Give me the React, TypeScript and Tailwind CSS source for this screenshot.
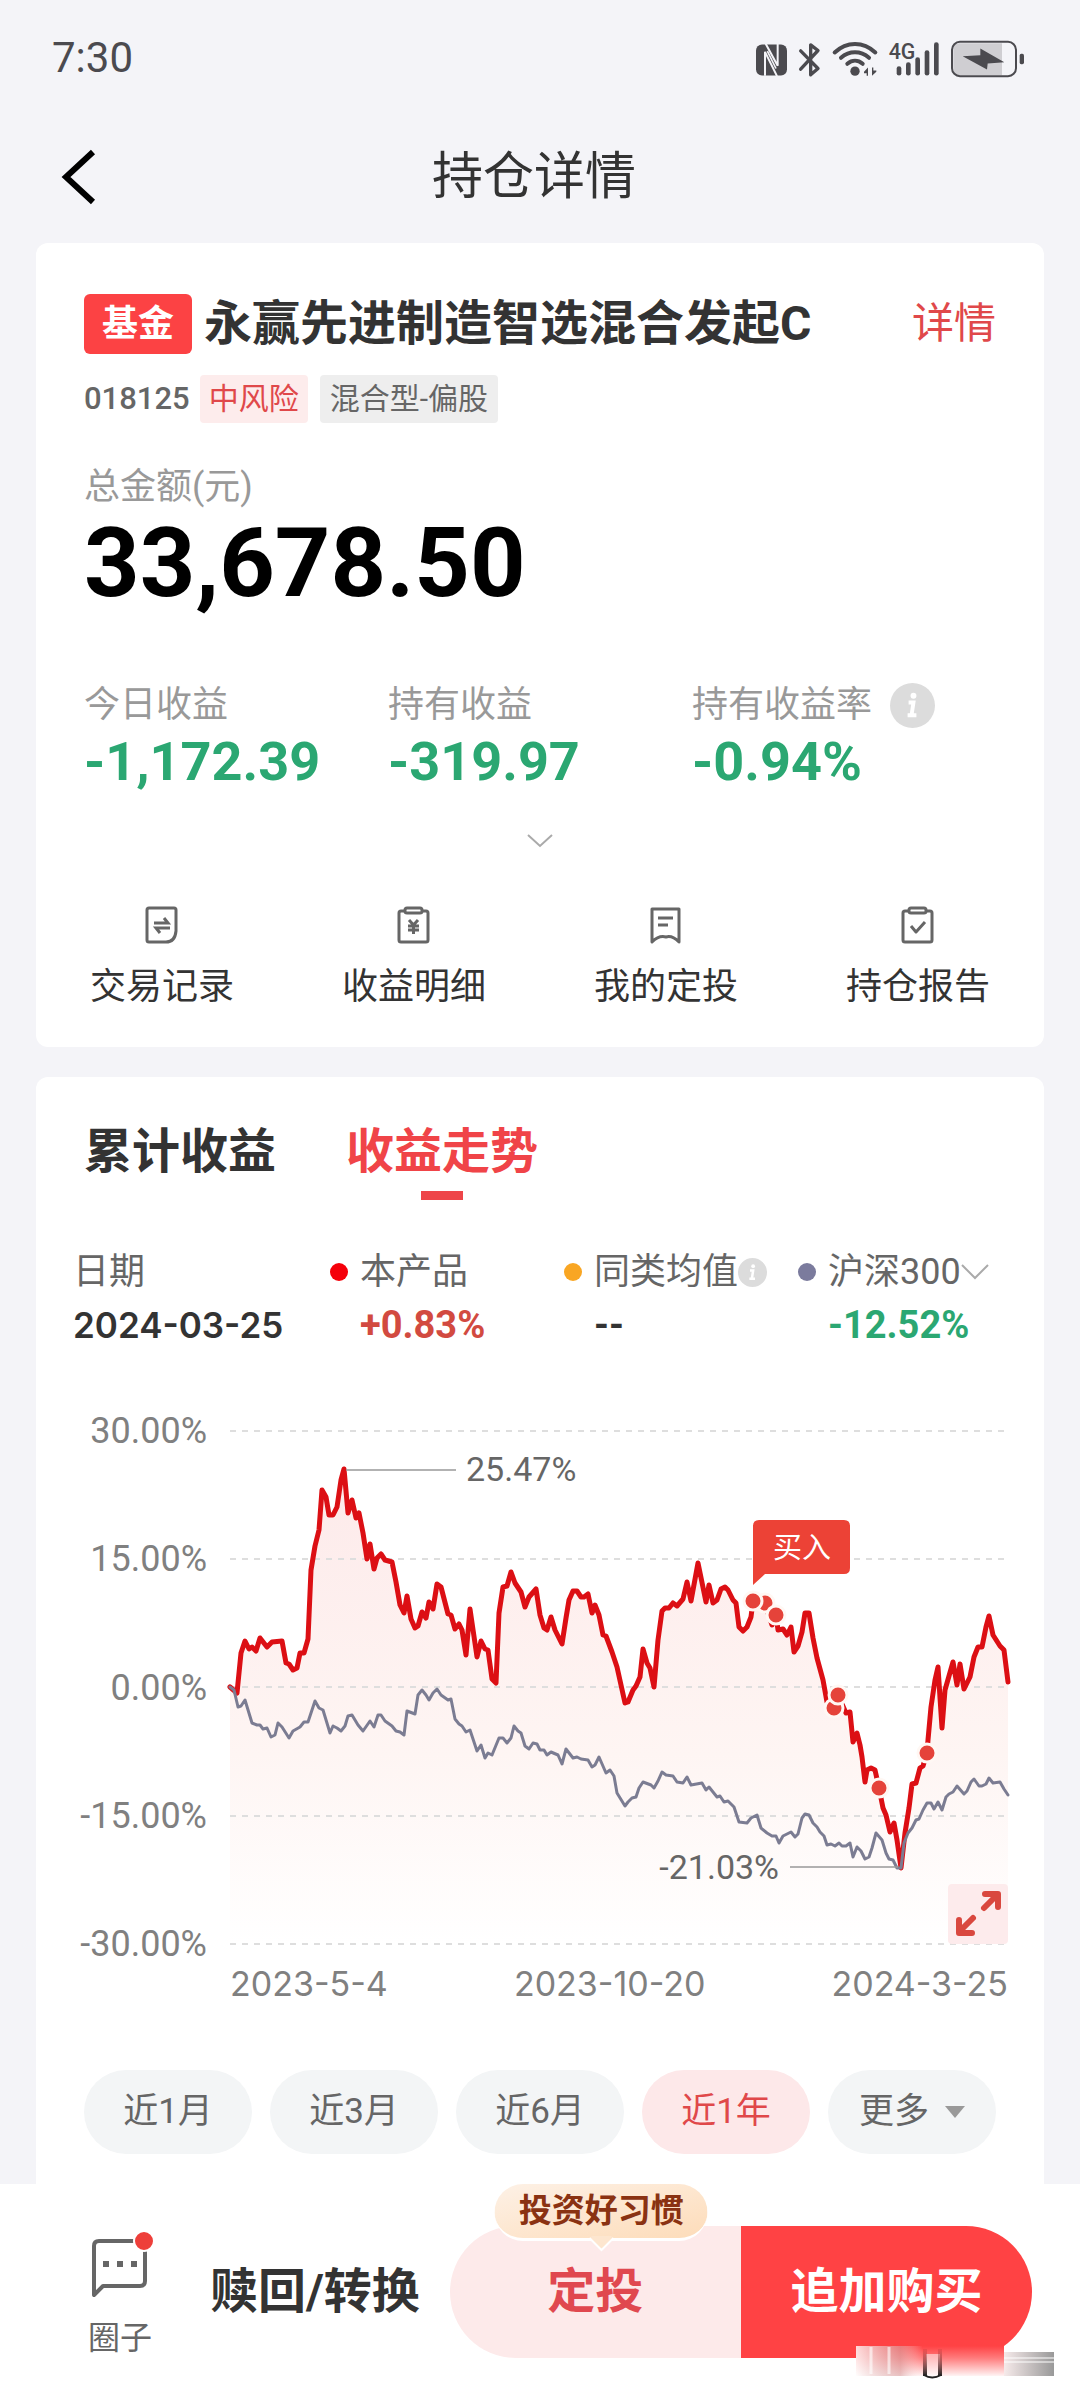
import React from "react";

const RED_LINE =
  "0,287 7,293 11,253 15,241 19,249 22,247 26,251 30,238 37,247 42,242 52,241 56,263 59,264 63,270 67,268 70,253 74,253 78,239 81,170 85,146 89,130 92,90 96,97 99,115 103,115 107,107 111,80 114,69 118,113 122,100 126,118 129,113 133,133 137,159 140,144 144,169 147,158 151,154 155,160 162,162 166,182 170,205 174,213 177,196 181,219 185,228 188,226 192,212 196,218 199,202 203,209 207,184 211,187 218,214 221,215 225,229 229,224 232,230 236,255 240,209 247,257 251,241 255,249 258,250 262,279 266,283 269,213 273,187 277,186 281,172 285,183 291,192 295,207 299,197 306,189 310,215 314,228 317,230 321,217 325,230 332,244 336,218 339,200 343,191 347,191 351,197 354,197 358,194 362,213 365,205 369,215 373,235 376,236 382,252 387,267 395,303 398,302 403,290 406,286 410,277 413,249 417,263 420,268 424,287 428,240 432,211 435,208 439,208 443,203 447,206 453,199 457,182 461,201 468,163 476,202 479,185 483,203 487,200 491,189 495,187 498,190 503,200 506,203 509,227 513,231 517,227 521,217 523,201 535,203 538,213 542,225 546,215 548,230 553,229 557,235 561,227 564,252 568,246 572,232 575,213 579,213 583,238 587,258 593,280 597,302 604,308 608,295 616,313 620,312 623,342 627,333 630,345 632,357 635,382 637,370 641,368 645,370 649,388 653,408 656,415 660,432 664,423 667,440 671,468 675,433 679,408 682,384 686,383 690,368 693,366 697,353 698,340 701,307 705,280 708,267 712,328 715,290 723,262 727,285 730,264 734,289 740,277 744,257 748,247 752,247 756,227 759,216 763,235 770,246 774,250 778,282";

const GRAY_LINE =
  "0,287 4,290 8,307 11,306 15,300 22,323 27,325 30,325 33,329 37,328 41,337 45,335 48,323 52,327 59,338 63,331 70,327 74,322 78,322 85,301 89,308 93,310 100,333 103,326 107,328 111,331 115,326 118,316 122,315 128,325 133,331 140,321 144,327 148,315 151,315 155,321 162,326 166,331 170,332 174,335 177,311 185,314 188,295 192,290 196,295 199,300 203,293 207,289 211,295 218,300 221,299 225,319 229,324 232,326 236,332 240,330 247,351 251,345 255,358 258,353 262,355 269,338 273,338 277,343 281,338 284,326 288,331 291,333 295,346 299,349 303,343 307,344 310,350 314,350 317,355 321,352 328,355 332,364 336,349 343,358 347,357 351,359 358,360 362,367 365,365 369,357 376,373 380,370 384,376 387,393 395,406 398,402 402,398 406,397 409,388 413,382 421,385 424,388 428,381 432,372 436,375 443,376 447,382 453,383 457,377 461,385 472,383 476,390 479,387 487,397 490,396 494,402 498,401 504,407 509,422 517,423 521,418 527,415 531,428 537,433 542,436 546,436 549,443 553,436 561,432 565,437 568,434 572,418 575,414 579,415 583,423 587,427 590,432 594,436 597,445 601,444 605,446 609,443 612,446 616,446 620,443 623,457 627,447 631,451 635,459 639,457 642,448 646,433 652,440 656,453 659,459 663,460 667,468 671,468 674,443 678,433 682,428 686,420 689,419 693,410 697,403 701,403 704,409 708,402 712,410 716,397 719,394 723,392 727,386 734,394 737,391 741,382 744,379 749,386 752,386 756,384 759,378 763,383 770,382 774,389 778,395";

const BUY_POINTS = [
  [535, 203],
  [523, 201],
  [546, 215],
  [604, 308],
  [608, 295],
  [649, 388],
  [697, 353],
];

function StatusIcons() {
  return (
    <svg viewBox="45 50 810 116" className="h-[39px] w-[270px]" fill="#4b4a4f" aria-hidden="true">
      <rect x="48" y="66" width="93" height="93" rx="18" />
      <g stroke="#f4f4f8" strokeWidth="6" fill="none">
        <path d="M75 160 V88 L111 161" />
        <path d="M77 64 L113 130 V64" />
        <path d="M82 86 L108 138" strokeWidth="5" />
      </g>
      <path d="M182 85 L234 138 L212 157 V67 L234 84 L182 140" fill="none" stroke="#4b4a4f" strokeWidth="10" strokeLinecap="round" strokeLinejoin="round" />
      <g fill="none" stroke="#4b4a4f" strokeWidth="12" strokeLinecap="round">
        <path d="M284 90 C320 56 370 56 406 90" />
        <path d="M303 106 C328 84 362 84 387 106" />
        <path d="M322 124 C336 112 354 112 368 124" />
      </g>
      <circle cx="345" cy="146" r="14" />
      <path d="M372 148 L384 135 V160 H380 V152 H372 Z M409 148 L396 160 V135 H400 V144 H409 Z" />
      <text x="446" y="108" fontFamily="Roboto, sans-serif" fontSize="64" fontWeight="500">4G</text>
      <g stroke="#4b4a4f" strokeWidth="14" strokeLinecap="round">
        <path d="M477 138 V152" />
        <path d="M505 126 V152" />
        <path d="M533 111 V152" />
        <path d="M561 90 V152" />
        <path d="M589 66 V152" />
      </g>
      <path d="M658 62 H786 V158 H658 Q640 158 640 138 V82 Q640 62 658 62 Z" fill="#cfced2" />
      <rect x="636" y="58" width="192" height="103" rx="24" fill="none" stroke="#4b4a4f" strokeWidth="6" />
      <path d="M668 101 L721 98 L721 78 L793 119 L743 123 L741 141 Z" />
      <rect x="839" y="94" width="13" height="31" rx="5" />
    </svg>
  );
}

function InfoDot({ className }: { className: string }) {
  return (
    <svg viewBox="0 0 46 46" className={className} aria-hidden="true">
      <circle cx="23" cy="23" r="23" fill="#dcdcdc" />
      <circle cx="24" cy="13" r="3" fill="#fff" />
      <path d="M19 20 H24 L22 33 M18 33 H27" fill="none" stroke="#fff" strokeWidth="4" />
    </svg>
  );
}

const iconProps = {
  viewBox: "0 0 40 40",
  className: "size-10",
  fill: "none",
  stroke: "#666",
  strokeWidth: 3,
  strokeLinejoin: "round" as const,
  "aria-hidden": true,
};

const ACTIONS = [
  {
    label: "交易记录",
    icon: (
      <svg {...iconProps}>
        <path d="M7 3 H32 Q34 3 34 5 V26 Q33 37 24 37 H7 Q5 37 5 35 V5 Q5 3 7 3 Z" />
        <path d="M12 18 H26 L22 13 M28 23 H14 L18 28" strokeWidth="3" strokeLinejoin="miter" />
      </svg>
    ),
  },
  {
    label: "收益明细",
    icon: (
      <svg {...iconProps}>
        <path d="M11 6 H7 Q5 6 5 8 V35 Q5 37 7 37 H32 Q34 37 34 35 V8 Q34 6 32 6 H28" />
        <rect x="11" y="3" width="17" height="5" rx="2" />
        <path d="M15 15 L19.500 20 L24 15 M19.500 20 V29 M14 21 H25 M14 25 H25" />
      </svg>
    ),
  },
  {
    label: "我的定投",
    icon: (
      <svg {...iconProps}>
        <path d="M6 4 H33 V37 Q26 30 20 32 Q13 30 6 37 Z" />
        <path d="M12 13 H27 M12 20 H22" />
      </svg>
    ),
  },
  {
    label: "持仓报告",
    icon: (
      <svg {...iconProps}>
        <path d="M11 6 H7 Q5 6 5 8 V35 Q5 37 7 37 H32 Q34 37 34 35 V8 Q34 6 32 6 H28" />
        <rect x="11" y="3" width="17" height="5" rx="2" />
        <path d="M13 21 L18 27 L27 17" />
      </svg>
    ),
  },
];

function StatusBar() {
  return (
    <div className="flex h-[116px] items-center justify-between pr-[55px] pl-[52px]">
      <span className="text-[42px] leading-[48px] text-[#4b4a4f]">7:30</span>
      <StatusIcons />
    </div>
  );
}

function NavBar() {
  return (
    <header className="relative flex h-[122px] items-center justify-center pr-3">
      <button aria-label="返回" className="absolute left-[54px]">
        <svg viewBox="0 0 48 60" className="h-[60px] w-12" fill="none" stroke="#000" strokeWidth="6" aria-hidden="true">
          <path d="M39 5 L12 30 L39 55" />
        </svg>
      </button>
      <h1 className="text-[51px] leading-[60px] text-[#333]">持仓详情</h1>
    </header>
  );
}

function Metric({ label, value, info }: { label: string; value: string; info?: boolean }) {
  return (
    <div>
      <div className="flex h-12 items-center gap-[18px] text-4xl leading-[48px] whitespace-nowrap text-[#999]">
        {label}
        {info && <InfoDot className="size-[45px]" />}
      </div>
      <div className="mt-[3px] text-[54px] leading-[60px] font-bold text-[#2ba772]">{value}</div>
    </div>
  );
}

function HoldingCard() {
  return (
    <section className="mx-9 mt-[5px] rounded-xl bg-white pt-[51px] pb-9">
      <div className="px-12">
        <div className="flex items-center">
          <span className="flex h-[60px] w-[108px] items-center justify-center rounded-md bg-[#fc4244] text-4xl font-bold text-white">基金</span>
          <h2 className="ml-3 text-[48px] leading-[60px] font-bold text-[#333]">永赢先进制造智选混合发起C</h2>
          <a href="#detail" className="ml-auto text-[42px] leading-[60px] text-[#e0484a]">详情</a>
        </div>
        <div className="mt-[21px] flex items-center text-[30px] leading-[48px]">
          <span className="text-[31px] font-medium text-[#666]">018125</span>
          <span className="ml-[10px] rounded bg-[#fdecec] px-[9px] text-[#e0484a]">中风险</span>
          <span className="ml-3 rounded bg-[#eee] px-[10px] text-[#666]">混合型-偏股</span>
        </div>
        <div className="mt-10 text-4xl leading-[48px] text-[#999]">总金额(元)</div>
        <div className="text-[97px] leading-[104px] font-bold text-black">33,678.50</div>
        <div className="mt-[66px] grid grid-cols-3">
          <Metric label="今日收益" value="-1,172.39" />
          <Metric label="持有收益" value="-319.97" />
          <Metric label="持有收益率" value="-0.94%" info />
        </div>
      </div>
      <button aria-label="展开" className="mx-auto mt-[31px] flex h-9 w-12 items-center justify-center">
        <svg viewBox="0 0 26 14" className="h-[14px] w-[26px]" fill="none" stroke="#aaa" strokeWidth="2" aria-hidden="true">
          <path d="M1 1 L13 12 L25 1" />
        </svg>
      </button>
      <nav className="mt-[46px] grid grid-cols-4">
        {ACTIONS.map((a) => (
          <button key={a.label} className="flex flex-col items-center gap-[18px] text-4xl leading-[48px] text-[#333]">
            {a.icon}
            {a.label}
          </button>
        ))}
      </nav>
    </section>
  );
}

function Legend() {
  return (
    <div className="mt-12 grid grid-cols-[257fr_234fr_234fr_234fr] gap-y-[5px] pr-3 pl-[37px] text-4xl leading-[48px] whitespace-nowrap text-[#666]">
      <div>日期</div>
      <div className="flex items-center gap-3">
        <i className="size-[18px] rounded-full bg-[#f5000a]" />
        本产品
      </div>
      <div className="flex items-center">
        <i className="mr-3 size-[18px] rounded-full bg-[#f9a623]" />
        同类均值
        <InfoDot className="size-[29px]" />
      </div>
      <button className="flex items-center">
        <i className="mr-3 size-[18px] rounded-full bg-[#7b7b9d]" />
        沪深300
        <svg viewBox="0 0 28 16" className="h-4 w-7" fill="none" stroke="#aaa" strokeWidth="2" aria-hidden="true">
          <path d="M1 1 L14 14 L27 1" />
        </svg>
      </button>
      <div className="font-[Inter] text-[35px] font-semibold text-[#333]">2024-03-25</div>
      <div className="pl-[30px] text-[38px] font-bold text-[#d24a40]">+0.83%</div>
      <div className="pl-[30px] text-[38px] font-bold text-[#333]">--</div>
      <div className="pl-[30px] text-[38px] font-bold text-[#2ba772]">-12.52%</div>
    </div>
  );
}

function Chart() {
  return (
    <div className="mt-[51px] grid grid-cols-[171fr_778fr] gap-x-[23px] pr-9">
      <div className="flex flex-col justify-between pt-[13px] text-right text-[36px] leading-9 text-[#808080]">
        <span>30.00%</span>
        <span>15.00%</span>
        <span>0.00%</span>
        <span>-15.00%</span>
        <span>-30.00%</span>
      </div>
      <div className="relative">
        <svg viewBox="0 0 778 562" className="block w-full overflow-visible" role="img" aria-label="收益走势">
          <defs>
            <linearGradient id="area" x1="0" y1="69" x2="0" y2="544" gradientUnits="userSpaceOnUse">
              <stop offset="0" stopColor="#fdeaea" />
              <stop offset="0.6" stopColor="#fef5f3" />
              <stop offset="1" stopColor="#ffffff" />
            </linearGradient>
          </defs>
          <polygon points={`0,544 ${RED_LINE} 778,544`} fill="url(#area)" />
          <g stroke="#dedede" strokeWidth="2" strokeDasharray="6 6">
            {[31, 159, 287, 416, 544].map((y) => (
              <path key={y} d={`M0 ${y} H778`} />
            ))}
          </g>
          <polyline points={RED_LINE} fill="none" stroke="#dc0f14" strokeWidth="5" strokeLinejoin="round" strokeLinecap="round" />
          <polyline points={GRAY_LINE} fill="none" stroke="#7b7c92" strokeWidth="3" strokeLinejoin="round" strokeLinecap="round" />
          <path d="M116 70 H226 M560 467 H668" stroke="#999" strokeWidth="1.500" />
          <g fontSize="34" fill="#666">
            <text x="236" y="81">25.47%</text>
            <text x="549" y="479" textAnchor="end">-21.03%</text>
          </g>
          {BUY_POINTS.map(([x, y]) => (
            <circle key={x} cx={x} cy={y} r="9" fill="#e5433a" stroke="#fff8f4" strokeWidth="3" />
          ))}
          <path d="M529 120 H614 Q620 120 620 126 V168 Q620 174 614 174 H535 L523 185 V126 Q523 120 529 120 Z" fill="#ec4236" />
          <text x="572" y="158" textAnchor="middle" fontSize="29" fill="#fff">买入</text>
        </svg>
        <button aria-label="全屏" className="absolute right-0 bottom-[18px] flex size-[60px] items-center justify-center rounded bg-[#fdebec]">
          <svg viewBox="0 0 60 60" className="size-[60px]" fill="none" stroke="#d9483f" strokeWidth="6" strokeLinecap="round" strokeLinejoin="round" aria-hidden="true">
            <path d="M36 24 L49 11 M37 10 H50 V23 M25 34 L12 47 M11 36 V49 H24" />
          </svg>
        </button>
      </div>
      <div className="col-start-2 flex justify-between font-[Inter] text-[34px] leading-[44px] text-[#808080]">
        <span>2023-5-4</span>
        <span>2023-10-20</span>
        <span>2024-3-25</span>
      </div>
    </div>
  );
}

function TrendCard() {
  return (
    <section className="mx-9 mt-[30px] rounded-t-xl bg-white pt-[45px] pb-[30px]">
      <div className="flex gap-[70px] px-12 text-[48px] leading-[60px] font-bold">
        <button className="self-start text-[#333]">累计收益</button>
        <button className="flex flex-col items-center gap-[9px] text-[#f04448]">
          收益走势
          <span className="h-[9px] w-[42px] bg-[#ee4549]" />
        </button>
      </div>
      <Legend />
      <Chart />
      <div className="mt-16 grid grid-cols-5 gap-[18px] px-12 text-[35px] text-[#666]">
        {["近1月", "近3月", "近6月"].map((t) => (
          <button key={t} className="h-[84px] rounded-full bg-[#f3f5f6]">{t}</button>
        ))}
        <button className="h-[84px] rounded-full bg-[#fde8e9] text-[#e0484a]">近1年</button>
        <button className="flex h-[84px] items-center justify-center gap-4 rounded-full bg-[#f3f5f6]">
          更多
          <svg viewBox="0 0 20 12" className="h-3 w-5" fill="#999" aria-hidden="true">
            <path d="M0 0 H20 L10 12 Z" />
          </svg>
        </button>
      </div>
    </section>
  );
}

function Smear() {
  return (
    <svg viewBox="0 0 200 34" className="pointer-events-none absolute top-[162px] right-[24px] h-[34px] w-[200px]" aria-hidden="true">
      <defs>
        <linearGradient id="sm-red" x1="0" y1="0" x2="0" y2="1">
          <stop offset="0" stopColor="#ff4244" />
          <stop offset="0.4" stopColor="#ff7b7c" />
          <stop offset="1" stopColor="#fff4f4" />
        </linearGradient>
        <linearGradient id="sm-side" x1="0" y1="0" x2="1" y2="0">
          <stop offset="0" stopColor="#fff" stopOpacity="0.8" />
          <stop offset="0.3" stopColor="#d9a3a3" stopOpacity="0.6" />
          <stop offset="0.45" stopColor="#fff" stopOpacity="0" />
        </linearGradient>
        <linearGradient id="sm-gray" x1="0" y1="0" x2="1" y2="0">
          <stop offset="0" stopColor="#f6eaea" />
          <stop offset="1" stopColor="#999" />
        </linearGradient>
        <linearGradient id="sm-dark" x1="0" y1="0" x2="0" y2="1">
          <stop offset="0" stopColor="#a33" stopOpacity="0.2" />
          <stop offset="1" stopColor="#222" />
        </linearGradient>
      </defs>
      <rect x="0" y="0" width="148" height="30" fill="url(#sm-red)" />
      <rect x="0" y="0" width="148" height="30" fill="url(#sm-side)" />
      <path d="M15 1 V28 M33 1 V28" stroke="#fff" strokeWidth="3" opacity="0.6" />
      <rect x="148" y="6" width="50" height="24" fill="url(#sm-gray)" />
      <path d="M148 12 H198 M148 16 H198" stroke="#fff" strokeWidth="1" />
      <rect x="70" y="8" width="14" height="22" fill="#fff" opacity="0.5" />
      <rect x="67" y="3" width="4" height="27" fill="url(#sm-dark)" />
      <rect x="82" y="3" width="4" height="27" fill="url(#sm-dark)" />
      <path d="M68 29 Q76 34 85 29" fill="none" stroke="#222" strokeWidth="2" />
    </svg>
  );
}

function BottomBar() {
  return (
    <footer className="relative flex flex-1 items-start bg-white pt-[42px] pr-12 pb-[42px] pl-[84px]">
      <button className="flex w-[72px] flex-col items-center text-[32px] leading-10 text-[#666]">
        <svg viewBox="0 3 72 92" className="h-[92px] w-[72px]" fill="none" aria-hidden="true">
          <path d="M10 72 V23 Q10 18 15 18 H56 Q61 18 61 23 V58 Q61 63 56 63 H19 Z" stroke="#666" strokeWidth="4" strokeLinejoin="round" />
          <path d="M19 41 H25 M33 41 H39 M47 41 H53" stroke="#666" strokeWidth="6" />
          <circle cx="60" cy="18" r="10" fill="#ee3f3a" stroke="#fff" strokeWidth="2" />
        </svg>
        圈子
      </button>
      <button className="ml-[54px] h-[132px] text-[48px] font-bold whitespace-nowrap text-[#333]">赎回/转换</button>
      <div className="relative ml-[30px] grid h-[132px] flex-1 grid-cols-2 text-[48px] font-bold">
        <button className="rounded-l-full bg-[#fdeaea] text-[#e0484f]">定投</button>
        <button className="rounded-r-full bg-[#ff4244] text-white">追加购买</button>
        <div className="absolute top-[-42px] left-[26%] -translate-x-1/2">
          <div className="h-[57px] rounded-full border-b-3 border-white bg-gradient-to-br from-[#fdf1e6] to-[#fddcb9] px-6 text-[33px] leading-[54px] whitespace-nowrap text-[#8a3212]">投资好习惯</div>
          <svg viewBox="0 0 30 16" className="absolute top-[52px] left-1/2 h-4 w-[30px] -translate-x-1/2" aria-hidden="true">
            <path d="M3 2 L15 14 L27 2" fill="#fde6cf" stroke="#fff" strokeWidth="2" />
            <path d="M5 0 H25 V2 H5 Z" fill="#fde6cf" />
          </svg>
        </div>
      </div>
      <Smear />
    </footer>
  );
}

export default function App() {
  return (
    <main className="flex min-h-screen flex-col bg-[#f4f4f8] font-[Roboto,'Noto_Sans_CJK_SC',sans-serif]">
      <StatusBar />
      <NavBar />
      <HoldingCard />
      <TrendCard />
      <BottomBar />
    </main>
  );
}
